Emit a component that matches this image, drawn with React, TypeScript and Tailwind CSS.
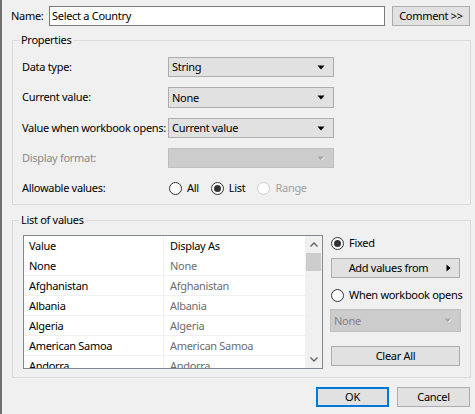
import React from 'react';

const font = { fontFamily: '"Segoe UI", "Noto Sans", Arial, sans-serif', letterSpacing: '-0.3px' };

function Arrow({ disabled }: { disabled?: boolean }) {
  return (
    <svg width="8" height="5" viewBox="0 0 8 5" className="shrink-0">
      <path d="M0.5 0.5 L7.5 0.5 L4 4.5 Z" fill={disabled ? '#a8a8a8' : '#000'} />
      {disabled && <path d="M4.5 4 L7.5 0.8" stroke="#fff" strokeWidth="1" />}
    </svg>
  );
}

function Select({ value, disabled, className = '' }: { value?: string; disabled?: boolean; className?: string }) {
  return (
    <div
      className={`flex items-center justify-between pl-[3px] pr-[8px] border ${
        disabled ? 'bg-[#cccccc] border-[#bfbfbf] text-[#838383]' : 'bg-[#e1e1e1] border-[#adadad] text-black'
      } ${className}`}
    >
      <span>{value}</span>
      <Arrow disabled={disabled} />
    </div>
  );
}

function Radio({ checked, disabled, label }: { checked?: boolean; disabled?: boolean; label: string }) {
  return (
    <div className={`flex items-center gap-[5px] ${disabled ? 'text-[#a0a0a0]' : 'text-black'}`}>
      <span
        className={`shrink-0 w-[13px] h-[13px] rounded-full border bg-white flex items-center justify-center ${
          disabled ? 'border-[#cccccc]' : 'border-[#333333]'
        }`}
      >
        {checked && <span className="w-[7px] h-[7px] rounded-full bg-[#333333]" />}
      </span>
      <span>{label}</span>
    </div>
  );
}

function Button({ children, className = '', primary }: { children: React.ReactNode; className?: string; primary?: boolean }) {
  return (
    <div
      className={`h-[20px] flex items-center justify-center bg-[#e1e1e1] ${
        primary ? 'border-2 border-[#0078d7]' : 'border border-[#adadad]'
      } ${className}`}
    >
      {children}
    </div>
  );
}

function Group({ title, className = '', children }: { title: string; className?: string; children: React.ReactNode }) {
  return (
    <div className={`relative border border-[#dcdcdc] ${className}`}>
      <span className="absolute -top-[10px] left-[6px] px-[2px] bg-[#f0f0f0] leading-[18px]">{title}</span>
      {children}
    </div>
  );
}

const rows = ['None', 'Afghanistan', 'Albania', 'Algeria', 'American Samoa', 'Andorra'];

export default function App() {
  return (
    <div
      style={font}
      className="w-[475px] h-[414px] bg-[#f0f0f0] border-l-2 border-[#6e6e6e] text-[11px] leading-[20px] text-black whitespace-nowrap overflow-hidden flex flex-col"
    >
      {/* name row */}
      <div className="flex items-center pt-[6px] pl-[9px]">
        <span className="w-[38px]">Name:</span>
        <div className="w-[336px] h-[20px] bg-white border border-[#7a7a7a] flex items-center pl-[2px]">
          Select a Country
        </div>
        <Button className="w-[78px] ml-[7px]">Comment &gt;&gt;</Button>
      </div>

      {/* properties */}
      <Group title="Properties" className="ml-[10px] mt-[14px] w-[459px] h-[165px]">
        <div className="grid grid-cols-[146px_166px] gap-y-[10px] pl-[9px] pt-[16px]">
          <span>Data type:</span>
          <Select value="String" className="h-[20px]" />
          <span>Current value:</span>
          <Select value="None" className="h-[21px]" />
          <span>Value when workbook opens:</span>
          <Select value="Current value" className="h-[20px]" />
          <span className="text-[#8b8b8b]">Display format:</span>
          <Select disabled className="h-[20px]" />
          <span>Allowable values:</span>
          <div className="flex items-center gap-[12px] pl-[1px] h-[20px]">
            <Radio label="All" />
            <Radio label="List" checked />
            <Radio label="Range" disabled />
          </div>
        </div>
      </Group>

      {/* list of values */}
      <Group title="List of values" className="ml-[10px] mt-[15px] w-[459px] h-[158px]">
        <div className="flex pl-[10px] pt-[14px]">
          <div className="w-[300px] h-[134px] border border-[#828790] bg-white flex overflow-hidden">
            <div className="flex-1 flex flex-col">
              <div className="flex h-[20px] shrink-0">
                <span className="w-[140px] pl-[5px] border-r border-[#f0f0f0]">Value</span>
                <span className="flex-1 pl-[6px]">Display As</span>
              </div>
              {rows.map((r) => (
                <div key={r} className="flex h-[20px] shrink-0 border-b border-[#f0f0f0]">
                  <span className="w-[140px] pl-[5px] border-r border-[#f0f0f0]">{r}</span>
                  <span className="flex-1 pl-[6px] text-[#6d6d6d]">{r}</span>
                </div>
              ))}
            </div>
            <div className="w-[17px] bg-[#f0f0f0] flex flex-col items-center">
              <div className="h-[17px] flex items-center justify-center">
                <svg width="8" height="5" viewBox="0 0 8 5">
                  <path d="M0.5 4.5 L4 1 L7.5 4.5" stroke="#606060" strokeWidth="1.3" fill="none" />
                </svg>
              </div>
              <div className="w-[15px] h-[18px] bg-[#cdcdcd]" />
              <div className="flex-1" />
              <div className="h-[17px] flex items-center justify-center">
                <svg width="8" height="5" viewBox="0 0 8 5">
                  <path d="M0.5 0.5 L4 4 L7.5 0.5" stroke="#606060" strokeWidth="1.3" fill="none" />
                </svg>
              </div>
            </div>
          </div>

          <div className="w-[131px] ml-[7px] flex flex-col -mt-[2px]">
            <div className="pl-[1px]">
              <Radio label="Fixed" checked />
            </div>
            <Button className="w-[129px] mt-[5px] ml-[1px] relative">
              <span className="pr-[14px]">Add values from</span>
              <svg width="5" height="8" viewBox="0 0 5 8" className="absolute right-[8px] top-[5px]">
                <path d="M0.5 0.5 L4.5 4 L0.5 7.5 Z" fill="#000" />
              </svg>
            </Button>
            <div className="mt-[7px] pl-[1px]">
              <Radio label="When workbook opens" />
            </div>
            <Select value="None" disabled className="h-[23px] mt-[4px] w-[131px] pl-[3px]" />
            <Button className="w-[129px] mt-[14px] ml-[1px]">Clear All</Button>
          </div>
        </div>
      </Group>

      {/* footer */}
      <div className="flex justify-end gap-[8px] pr-[5px] mt-[9px]">
        <Button primary className="w-[73px]">OK</Button>
        <Button className="w-[73px]">Cancel</Button>
      </div>
    </div>
  );
}
